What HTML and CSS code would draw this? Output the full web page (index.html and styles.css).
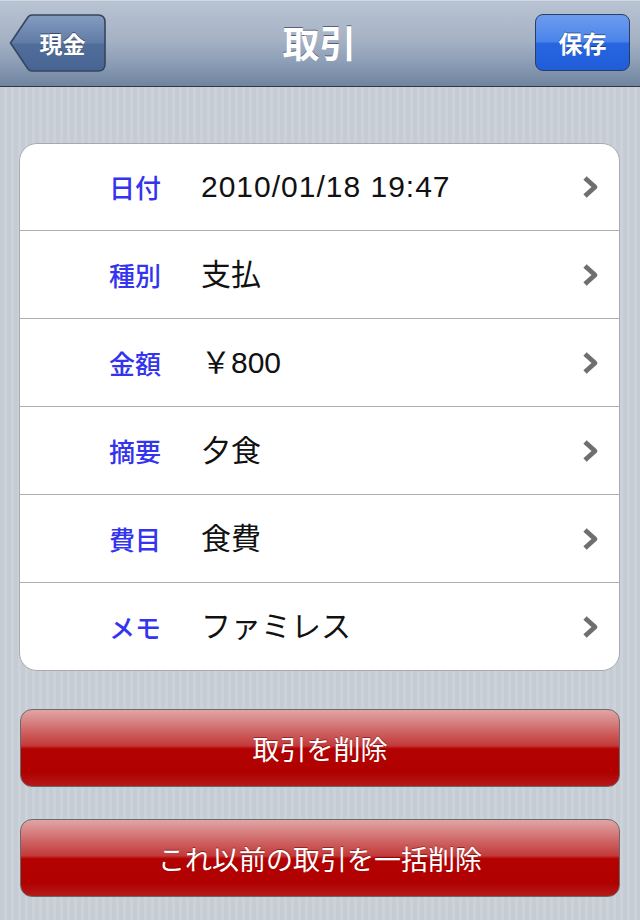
FILE: index.html
```html
<!DOCTYPE html>
<html lang="ja">
<head>
<meta charset="utf-8">
<title>取引</title>
<link rel="stylesheet" href="styles.css">
</head>
<body>
<div class="screen">
  <header class="navbar">
    <button class="back">
      <svg class="back-bg" viewBox="0 0 97 58" width="97" height="58" aria-hidden="true">
        <defs>
          <linearGradient id="bg" x1="0" y1="0" x2="0" y2="1">
            <stop offset="0" stop-color="#859cc0"/>
            <stop offset="0.5" stop-color="#607ba6"/>
            <stop offset="0.52" stop-color="#516d9a"/>
            <stop offset="1" stop-color="#476493"/>
          </linearGradient>
        </defs>
        <path d="M1.5 29 L19 3 Q20.5 1 23 1 H89 Q96 1 96 8 V50 Q96 57 89 57 H23 Q20.5 57 19 55 Z" fill="url(#bg)" stroke="#34465f" stroke-width="1.6"/>
      </svg>
      <span class="back-label">現金</span>
    </button>
    <h1 class="title">取引</h1>
    <button class="save">保存</button>
  </header>

  <main class="content">
    <ul class="card">
      <li class="row">
        <span class="label">日付</span>
        <span class="value value-date">2010/01/18 19:47</span>
        <svg class="chev" viewBox="0 0 17 24" width="17" height="24" aria-hidden="true"><polyline points="3,3 13,12 3,21" fill="none" stroke="#6f6f6f" stroke-width="4.8" stroke-linejoin="round"/></svg>
      </li>
      <li class="row">
        <span class="label">種別</span>
        <span class="value">支払</span>
        <svg class="chev" viewBox="0 0 17 24" width="17" height="24" aria-hidden="true"><polyline points="3,3 13,12 3,21" fill="none" stroke="#6f6f6f" stroke-width="4.8" stroke-linejoin="round"/></svg>
      </li>
      <li class="row">
        <span class="label">金額</span>
        <span class="value">￥800</span>
        <svg class="chev" viewBox="0 0 17 24" width="17" height="24" aria-hidden="true"><polyline points="3,3 13,12 3,21" fill="none" stroke="#6f6f6f" stroke-width="4.8" stroke-linejoin="round"/></svg>
      </li>
      <li class="row">
        <span class="label">摘要</span>
        <span class="value">夕食</span>
        <svg class="chev" viewBox="0 0 17 24" width="17" height="24" aria-hidden="true"><polyline points="3,3 13,12 3,21" fill="none" stroke="#6f6f6f" stroke-width="4.8" stroke-linejoin="round"/></svg>
      </li>
      <li class="row">
        <span class="label">費目</span>
        <span class="value">食費</span>
        <svg class="chev" viewBox="0 0 17 24" width="17" height="24" aria-hidden="true"><polyline points="3,3 13,12 3,21" fill="none" stroke="#6f6f6f" stroke-width="4.8" stroke-linejoin="round"/></svg>
      </li>
      <li class="row">
        <span class="label">メモ</span>
        <span class="value">ファミレス</span>
        <svg class="chev" viewBox="0 0 17 24" width="17" height="24" aria-hidden="true"><polyline points="3,3 13,12 3,21" fill="none" stroke="#6f6f6f" stroke-width="4.8" stroke-linejoin="round"/></svg>
      </li>
    </ul>

    <button class="danger">取引を削除</button>
    <button class="danger danger-second">これ以前の取引を一括削除</button>
  </main>
</div>
</body>
</html>
```

FILE: styles.css
```css
* { box-sizing: border-box; }

html, body {
  margin: 0;
  padding: 0;
}

body {
  width: 640px;
  height: 920px;
  overflow: hidden;
  font-family: "Noto Sans CJK JP", "Liberation Sans", sans-serif;
}

.screen {
  width: 640px;
  height: 920px;
  display: flex;
  flex-direction: column;
  background: repeating-linear-gradient(90deg, #c5ccd4 0px, #c5ccd4 4px, #ccd2d9 4px, #ccd2d9 7px);
}

/* Navigation bar */
.navbar {
  height: 87px;
  flex: none;
  display: flex;
  align-items: center;
  padding: 0 10px 1px 9px;
  background: linear-gradient(#b9c4d3 0%, #a6b3c5 45%, #8a9cb5 75%, #6f849f 100%);
  border-bottom: 1px solid #2e3846;
  box-shadow: inset 0 1px 0 #d0d8e2;
}

.back {
  position: relative;
  width: 97px;
  height: 58px;
  padding: 0 0 0 10px;
  border: 0;
  background: none;
  display: flex;
  align-items: center;
  justify-content: center;
  font-family: inherit;
  cursor: pointer;
}

.back-bg {
  position: absolute;
  left: 0;
  top: 0;
}

.back-label {
  position: relative;
  color: #fff;
  font-size: 23px;
  font-weight: 700;
  text-shadow: 0 -1px 0 rgba(0, 0, 0, 0.45);
}

.title {
  flex: 1;
  margin: 0;
  text-align: center;
  color: #fff;
  font-size: 37px;
  font-weight: 700;
  line-height: 1;
  padding-right: 2px;
  text-shadow: 0 -1px 0 rgba(30, 40, 60, 0.6);
}

.save {
  width: 95px;
  height: 57px;
  border: 1.5px solid #2b3e62;
  border-radius: 8px;
  background: linear-gradient(#6d9cee 0%, #4a84ea 48%, #2766e0 52%, #1f5ed8 100%);
  color: #fff;
  font-family: inherit;
  font-size: 24px;
  font-weight: 700;
  text-shadow: 0 -1px 0 rgba(0, 0, 0, 0.4);
  padding: 0;
  cursor: pointer;
}

/* Content */
.content {
  flex: 1;
  display: flex;
  flex-direction: column;
  padding: 56px 20px 0 19px;
}

.card {
  list-style: none;
  margin: 0;
  padding: 0;
  background: #fff;
  border: 1px solid #a8aaad;
  border-radius: 18px;
  overflow: hidden;
}

.row {
  height: 88px;
  display: flex;
  align-items: center;
  border-top: 1px solid #acaeb1;
  padding-right: 20px;
}

.row:first-child {
  height: 86px;
  border-top: 0;
}

.label {
  width: 141px;
  flex: none;
  text-align: right;
  color: #3434f0;
  font-size: 26px;
  font-weight: 500;
  line-height: 1;
}

.value {
  flex: 1;
  margin-left: 40px;
  color: #111;
  font-family: "Liberation Sans", "Noto Sans CJK JP", sans-serif;
  font-size: 30px;
  line-height: 1;
}

.value-date {
  letter-spacing: 1px;
}

.chev {
  flex: none;
  display: block;
}

/* Red buttons */
.danger {
  height: 78px;
  margin: 38px 0 0 1px;
  border: 1.5px solid #6a6a6a;
  border-radius: 12px;
  background: linear-gradient(#e2a4a4 0%, #d98a8a 12%, #cd5f5f 30%, #c33a3a 47%, #b40202 51%, #b00000 82%, #b41a1a 100%);
  color: #fff;
  font-family: inherit;
  font-size: 27px;
  font-weight: 400;
  text-shadow: 0 -1px 0 rgba(80, 0, 0, 0.5);
  padding: 0;
  cursor: pointer;
}

.danger-second {
  margin-top: 32px;
}
```
